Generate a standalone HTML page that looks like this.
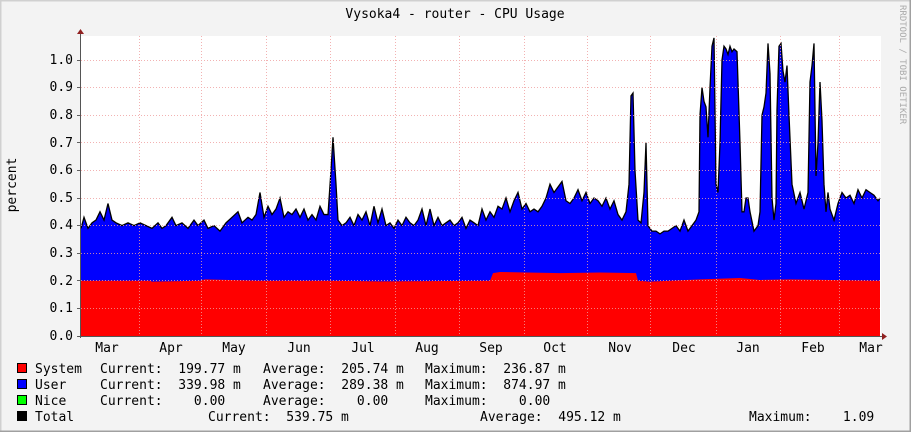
<!DOCTYPE html>
<html><head><meta charset="utf-8"><style>
body{margin:0;width:911px;height:432px;overflow:hidden;background:#f3f3f3}
svg{display:block}
text{font-family:"DejaVu Sans Mono","Liberation Mono",monospace;font-size:13px;fill:#000;white-space:pre}
</style></head><body>
<svg width="911" height="432" xmlns="http://www.w3.org/2000/svg">
<rect x="0" y="0" width="911" height="432" fill="#f3f3f3"/>
<path d="M0.5 432V0.5H911" stroke="#d0d0d0" fill="none" stroke-width="2"/>
<path d="M0 431.5H910.5V0" stroke="#a0a0a0" fill="none" stroke-width="2"/>
<rect x="81" y="36" width="800" height="300" fill="#fff"/>
<g transform="translate(0,336) scale(1,-276)">
<polygon id="blue" fill="#0000ff" points="81,0 81,.39 84,.43 88,.39 92,.41 96,.42 100,.45 104,.42 108,.48 112,.42 116,.41 122,.40 128,.41 134,.40 140,.41 146,.40 152,.39 158,.41 162,.39 166,.40 172,.43 176,.40 182,.41 188,.39 194,.42 198,.40 204,.42 208,.39 214,.40 220,.38 226,.41 232,.43 238,.45 242,.41 248,.43 252,.42 256,.44 260,.52 264,.43 268,.47 272,.44 276,.46 280,.50 284,.43 288,.45 292,.44 296,.46 300,.43 304,.46 308,.42 312,.44 316,.42 320,.47 324,.44 328,.44 331,.60 333,.72 336,.55 338,.42 342,.40 346,.41 350,.43 354,.40 358,.44 362,.42 366,.45 370,.40 374,.47 378,.41 382,.46 386,.40 390,.41 394,.39 398,.42 402,.40 406,.43 410,.41 414,.40 418,.42 422,.46 426,.40 430,.46 434,.40 438,.43 442,.40 446,.41 450,.42 454,.40 458,.41 462,.43 466,.39 470,.42 474,.41 478,.40 482,.46 486,.42 490,.45 494,.43 498,.47 502,.46 506,.50 510,.45 514,.49 518,.52 522,.46 526,.48 530,.45 534,.46 538,.45 542,.47 546,.50 550,.55 554,.52 558,.54 562,.56 566,.49 570,.48 574,.50 578,.53 582,.49 586,.52 590,.48 594,.50 598,.49 602,.47 606,.50 610,.46 614,.49 618,.44 622,.42 626,.45 629,.55 631,.87 633,.88 635,.60 638,.42 641,.41 644,.52 646,.70 648,.40 652,.38 656,.38 660,.37 664,.38 668,.38 672,.39 676,.40 680,.38 684,.42 688,.38 692,.40 696,.42 699,.45 700,.80 702,.90 704,.85 706,.83 708,.72 710,.90 712,1.05 714,1.08 716,.55 718,.52 720,.70 722,1.0 724,1.05 726,1.04 728,1.02 730,1.05 732,1.03 734,1.04 737,1.03 740,.70 742,.45 744,.45 746,.50 748,.50 750,.45 754,.38 758,.40 760,.45 762,.80 764,.83 766,.88 768,1.06 770,.95 772,.50 774,.42 776,.48 777,.82 779,1.05 781,1.06 783,.96 785,.92 787,.98 789,.80 792,.55 796,.48 800,.52 804,.46 808,.52 810,.92 812,.98 814,1.06 816,.58 818,.70 820,.92 822,.78 824,.55 826,.45 828,.52 830,.46 834,.42 838,.48 842,.52 846,.50 850,.51 854,.48 858,.53 862,.50 866,.53 870,.52 874,.51 878,.49 880,.50 880,0"/>
<polyline fill="none" stroke="#000" stroke-width="1.3" vector-effect="non-scaling-stroke" points="81,.39 84,.43 88,.39 92,.41 96,.42 100,.45 104,.42 108,.48 112,.42 116,.41 122,.40 128,.41 134,.40 140,.41 146,.40 152,.39 158,.41 162,.39 166,.40 172,.43 176,.40 182,.41 188,.39 194,.42 198,.40 204,.42 208,.39 214,.40 220,.38 226,.41 232,.43 238,.45 242,.41 248,.43 252,.42 256,.44 260,.52 264,.43 268,.47 272,.44 276,.46 280,.50 284,.43 288,.45 292,.44 296,.46 300,.43 304,.46 308,.42 312,.44 316,.42 320,.47 324,.44 328,.44 331,.60 333,.72 336,.55 338,.42 342,.40 346,.41 350,.43 354,.40 358,.44 362,.42 366,.45 370,.40 374,.47 378,.41 382,.46 386,.40 390,.41 394,.39 398,.42 402,.40 406,.43 410,.41 414,.40 418,.42 422,.46 426,.40 430,.46 434,.40 438,.43 442,.40 446,.41 450,.42 454,.40 458,.41 462,.43 466,.39 470,.42 474,.41 478,.40 482,.46 486,.42 490,.45 494,.43 498,.47 502,.46 506,.50 510,.45 514,.49 518,.52 522,.46 526,.48 530,.45 534,.46 538,.45 542,.47 546,.50 550,.55 554,.52 558,.54 562,.56 566,.49 570,.48 574,.50 578,.53 582,.49 586,.52 590,.48 594,.50 598,.49 602,.47 606,.50 610,.46 614,.49 618,.44 622,.42 626,.45 629,.55 631,.87 633,.88 635,.60 638,.42 641,.41 644,.52 646,.70 648,.40 652,.38 656,.38 660,.37 664,.38 668,.38 672,.39 676,.40 680,.38 684,.42 688,.38 692,.40 696,.42 699,.45 700,.80 702,.90 704,.85 706,.83 708,.72 710,.90 712,1.05 714,1.08 716,.55 718,.52 720,.70 722,1.0 724,1.05 726,1.04 728,1.02 730,1.05 732,1.03 734,1.04 737,1.03 740,.70 742,.45 744,.45 746,.50 748,.50 750,.45 754,.38 758,.40 760,.45 762,.80 764,.83 766,.88 768,1.06 770,.95 772,.50 774,.42 776,.48 777,.82 779,1.05 781,1.06 783,.96 785,.92 787,.98 789,.80 792,.55 796,.48 800,.52 804,.46 808,.52 810,.92 812,.98 814,1.06 816,.58 818,.70 820,.92 822,.78 824,.55 826,.45 828,.52 830,.46 834,.42 838,.48 842,.52 846,.50 850,.51 854,.48 858,.53 862,.50 866,.53 870,.52 874,.51 878,.49 880,.50"/>
<polygon fill="#ff0000" points="81,0 81,.2 150,.2 152,.197 200,.2 205,.205 260,.2 330,.2 380,.198 490,.2 493,.228 500,.232 560,.228 600,.23 636,.228 638,.2 650,.197 700,.205 740,.21 760,.203 790,.205 880,.2 880,0"/>
</g>
<g stroke="#f0a0a0" stroke-dasharray="1,2" stroke-width="1" opacity="0.8">
<path d="M81 308.5H881M81 280.5H881M81 253.5H881M81 225.5H881M81 198.5H881M81 170.5H881M81 142.5H881M81 115.5H881M81 87.5H881M81 60.5H881"/>
<path d="M139.5 36V336M201.5 36V336M266.5 36V336M330.5 36V336M395.5 36V336M459.5 36V336M524.5 36V336M587.5 36V336M650.5 36V336M716.5 36V336M780.5 36V336M839.5 36V336"/>
</g>
<g stroke="#000" stroke-width="1" opacity="0.6">
<path d="M77 336.5H81M77 308.5H81M77 280.5H81M77 253.5H81M77 225.5H81M77 198.5H81M77 170.5H81M77 142.5H81M77 115.5H81M77 87.5H81M77 60.5H81"/>
</g>
<path d="M80.5 32V338M78 336.5H884" stroke="#555" stroke-width="1"/>
<polygon points="77,34 84,34 80.5,29" fill="#902020"/>
<polygon points="882,333 882,340 887,336.5" fill="#902020"/>
<g text-anchor="end">
<text x="73" y="340">0.0</text><text x="73" y="312">0.1</text><text x="73" y="285">0.2</text><text x="73" y="257">0.3</text><text x="73" y="229">0.4</text><text x="73" y="202">0.5</text><text x="73" y="174">0.6</text><text x="73" y="147">0.7</text><text x="73" y="119">0.8</text><text x="73" y="91">0.9</text><text x="73" y="64">1.0</text>
</g>
<g text-anchor="middle">
<text x="107" y="352">Mar</text><text x="171" y="352">Apr</text><text x="234" y="352">May</text><text x="299" y="352">Jun</text><text x="363" y="352">Jul</text><text x="427" y="352">Aug</text><text x="491" y="352">Sep</text><text x="555" y="352">Oct</text><text x="620" y="352">Nov</text><text x="684" y="352">Dec</text><text x="748" y="352">Jan</text><text x="813" y="352">Feb</text><text x="871" y="352">Mar</text>
<text x="455" y="18">Vysoka4 - router - CPU Usage</text>
<text transform="translate(16,185) rotate(-90)">percent</text>
</g>
<text transform="translate(900,5) rotate(90)" style="font-size:9px;fill:#aaa">RRDTOOL / TOBI OETIKER</text>
<g stroke="#000" stroke-width="1">
<rect x="17.5" y="363.5" width="9" height="9" fill="#ff0000"/>
<rect x="17.5" y="379.5" width="9" height="9" fill="#0000ff"/>
<rect x="17.5" y="395.5" width="9" height="9" fill="#00ff00"/>
<rect x="17.5" y="411.5" width="9" height="9" fill="#000"/>
</g>
<g>
<text x="35" y="373">System</text><text x="100" y="373">Current:  199.77 m</text><text x="263" y="373">Average:  205.74 m</text><text x="425" y="373">Maximum:  236.87 m</text>
<text x="35" y="389">User</text><text x="100" y="389">Current:  339.98 m</text><text x="263" y="389">Average:  289.38 m</text><text x="425" y="389">Maximum:  874.97 m</text>
<text x="35" y="405">Nice</text><text x="100" y="405">Current:    0.00</text><text x="263" y="405">Average:    0.00</text><text x="425" y="405">Maximum:    0.00</text>
<text x="35" y="421">Total</text><text x="208" y="421">Current:  539.75 m</text><text x="480" y="421">Average:  495.12 m</text><text x="749" y="421">Maximum:    1.09</text>
</g>
</svg>
</body></html>
